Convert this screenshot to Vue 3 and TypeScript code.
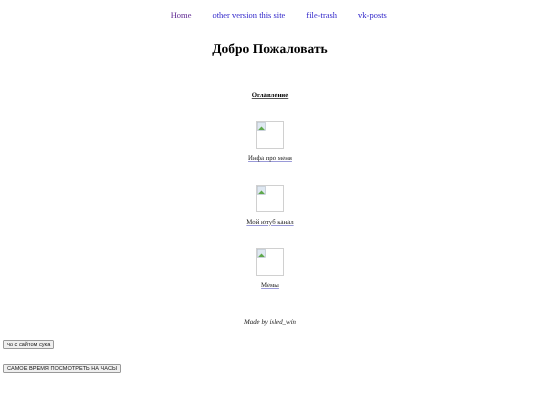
<script setup lang="ts">
const navLinks = [
  { label: 'Home', visited: true },
  { label: 'other version this site', visited: false },
  { label: 'file-trash', visited: false },
  { label: 'vk-posts', visited: false },
]
const items = ['Инфа про меня', 'Мой ютуб канал', 'Мемы']
</script>

<template>
  <div class="page">
    <nav class="nav">
      <a v-for="l in navLinks" :key="l.label" href="#" :class="{ visited: l.visited }">{{ l.label }}</a>
    </nav>
    <h1 class="title">Добро Пожаловать</h1>
    <h2 class="toc">Оглавление</h2>
    <section v-for="item in items" :key="item" class="item">
      <div class="broken">
        <svg width="9" height="9" viewBox="0 0 8 8">
          <rect x="0.5" y="0.5" width="7" height="7" fill="#dfe8f2" stroke="#b9c2cc" stroke-width="0.6" />
          <path d="M1 7l3-3 3 3z" fill="#5fa84c" />
        </svg>
      </div>
      <a href="#" class="item-link">{{ item }}</a>
    </section>
    <p class="made">Made by ísled_wín</p>
    <div class="btn-row first"><button>чо с сайтом сука</button></div>
    <div class="btn-row second"><button>САМОЕ ВРЕМЯ ПОСМОТРЕТЬ НА ЧАСЫ</button></div>
  </div>
</template>

<style scoped>
.page { width: 540px; height: 405px; overflow: hidden; font-family: "Liberation Serif", serif; color: #000; filter: blur(0.25px); text-rendering: geometricPrecision; }
.nav { display: flex; justify-content: center; gap: 21px; padding: 10px 0 0 17.5px; font-size: 8.5px; line-height: 11px; }
.nav a { color: #2a1fc8; text-decoration: none; }
.nav a.visited { color: #551a8b; }
.title { margin: 18.5px 0 0; text-align: center; font-size: 13.5px; line-height: 17px; font-weight: bold; }
.toc { margin: 34px 0 0; text-align: center; font-size: 6.8px; line-height: 9px; font-weight: bold; text-decoration: underline; text-decoration-color: #555; }
.item { display: flex; flex-direction: column; align-items: center; margin-top: 21.5px; }
.toc + .item { margin-top: 21.5px; }
.broken { border: 1px solid #d0d0d0; box-sizing: border-box; display: flex; width: 27.5px; height: 27.5px; }
.broken svg { display: block; }
.item-link { margin-top: 5.5px; font-size: 6.8px; line-height: 9px; color: #222; text-decoration: underline; text-decoration-color: #9a9ad8; }
.made { margin: 27.5px 0 0; text-align: center; font-size: 6.9px; line-height: 9px; font-style: italic; color: #222; }
.btn-row { padding-left: 3px; }
.btn-row.first { margin-top: 13.5px; }
.btn-row.second { margin-top: 15px; }
button { display: block; font-family: "Liberation Sans", sans-serif; font-size: 5.6px; line-height: 7px; padding: 0 3px; height: 9px; background: #efefef; border: 1px solid #999; border-radius: 1px; color: #222; }
</style>
